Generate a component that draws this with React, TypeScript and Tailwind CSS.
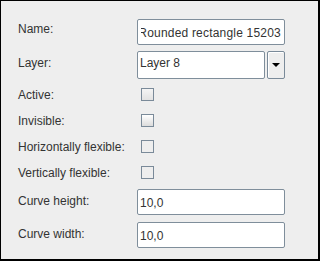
export default function App() {
  return (
    <div className="w-[320px] h-[261px] bg-[#eeeeee] border-black border-t border-l border-r-2 border-b-2 pl-[17px] pt-[18px] text-[12px] leading-[15px] text-[#333333] font-['Liberation_Sans',Arial,sans-serif]">
      {/* Name */}
      <div className="flex h-[26px]">
        <div className="w-[119px] pt-[3px]">Name:</div>
        <div className="w-[148px] h-[26px] bg-white border border-[#7f8e9b] rounded-[2px] pl-[3px] pr-[3px] pt-[6px]">
          <div className="overflow-hidden flex justify-end whitespace-nowrap tracking-[0.2px]">
            <span>Rounded rectangle 15203</span>
          </div>
        </div>
      </div>
      {/* Layer */}
      <div className="flex h-[28px] mt-[6px]">
        <div className="w-[119px] pt-[5px]">Layer:</div>
        <div className="flex gap-[2px]">
          <div className="w-[128px] h-[28px] bg-white border border-[#7f8e9b] rounded-[2px] pl-[2px] pt-[4px]">
            Layer 8
          </div>
          <div className="w-[18px] h-[28px] border border-[#7a8a99] rounded-[2px] bg-[#eeeeee] shadow-[inset_1px_1px_0_#ffffff] flex items-center justify-center">
            <svg width="8" height="4" viewBox="0 0 8 4">
              <polygon points="0,0 8,0 4,4" fill="#000000" />
            </svg>
          </div>
        </div>
      </div>
      {/* Active */}
      <div className="flex h-[13px] mt-[9px]">
        <div className="w-[119px]">Active:</div>
        <div className="ml-[4px] w-[13px] h-[13px] border border-[#7a8a99] bg-linear-to-b from-[#f4f4f4] to-[#e2e2e2]" />
      </div>
      {/* Invisible */}
      <div className="flex h-[13px] mt-[13px]">
        <div className="w-[119px]">Invisible:</div>
        <div className="ml-[4px] w-[13px] h-[13px] border border-[#7a8a99] bg-linear-to-b from-[#ffffff] to-[#dcdcdc]" />
      </div>
      {/* Horizontally flexible */}
      <div className="flex h-[13px] mt-[13px]">
        <div className="w-[119px]">Horizontally flexible:</div>
        <div className="ml-[4px] w-[13px] h-[13px] border border-[#7a8a99] bg-[#eeeeee]" />
      </div>
      {/* Vertically flexible */}
      <div className="flex h-[13px] mt-[13px]">
        <div className="w-[119px]">Vertically flexible:</div>
        <div className="ml-[4px] w-[13px] h-[13px] border border-[#7a8a99] bg-[#eeeeee]" />
      </div>
      {/* Curve height */}
      <div className="flex h-[26px] mt-[10px]">
        <div className="w-[119px] pt-[5px]">Curve height:</div>
        <div className="w-[148px] h-[26px] bg-white border border-[#7f8e9b] rounded-[2px] pl-[2px] pt-[6px]">
          10,0
        </div>
      </div>
      {/* Curve width */}
      <div className="flex h-[26px] mt-[7px]">
        <div className="w-[119px] pt-[5px]">Curve width:</div>
        <div className="w-[148px] h-[26px] bg-white border border-[#7f8e9b] rounded-[2px] pl-[2px] pt-[6px]">
          10,0
        </div>
      </div>
    </div>
  );
}
